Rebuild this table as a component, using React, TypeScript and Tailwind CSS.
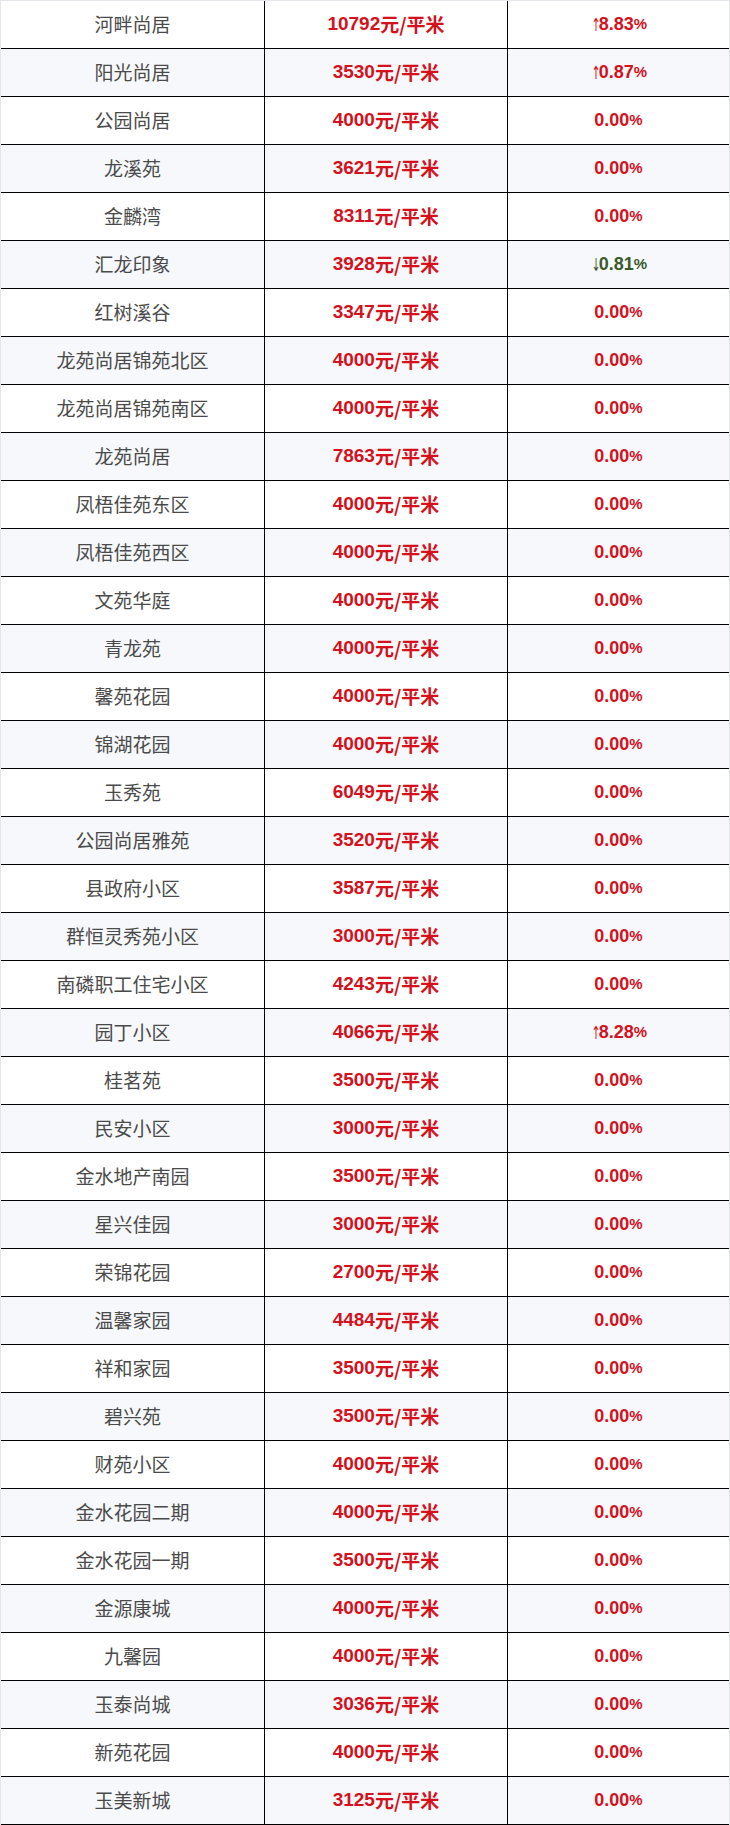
import React from "react";

type Row = [string, number, string?, "up" | "down"?];

const rows: Row[] = [
  ["河畔尚居", 10792, "8.83", "up"],
  ["阳光尚居", 3530, "0.87", "up"],
  ["公园尚居", 4000],
  ["龙溪苑", 3621],
  ["金麟湾", 8311],
  ["汇龙印象", 3928, "0.81", "down"],
  ["红树溪谷", 3347],
  ["龙苑尚居锦苑北区", 4000],
  ["龙苑尚居锦苑南区", 4000],
  ["龙苑尚居", 7863],
  ["凤梧佳苑东区", 4000],
  ["凤梧佳苑西区", 4000],
  ["文苑华庭", 4000],
  ["青龙苑", 4000],
  ["馨苑花园", 4000],
  ["锦湖花园", 4000],
  ["玉秀苑", 6049],
  ["公园尚居雅苑", 3520],
  ["县政府小区", 3587],
  ["群恒灵秀苑小区", 3000],
  ["南磷职工住宅小区", 4243],
  ["园丁小区", 4066, "8.28", "up"],
  ["桂茗苑", 3500],
  ["民安小区", 3000],
  ["金水地产南园", 3500],
  ["星兴佳园", 3000],
  ["荣锦花园", 2700],
  ["温馨家园", 4484],
  ["祥和家园", 3500],
  ["碧兴苑", 3500],
  ["财苑小区", 4000],
  ["金水花园二期", 4000],
  ["金水花园一期", 3500],
  ["金源康城", 4000],
  ["九馨园", 4000],
  ["玉泰尚城", 3036],
  ["新苑花园", 4000],
  ["玉美新城", 3125],
];

function Arrow({ dir }: { dir: "up" | "down" }) {
  return (
    <span className="mr-[2px] inline-block w-[7px] scale-x-60 font-['DejaVu_Sans',sans-serif] text-[18px] font-normal">
      {dir === "up" ? "↑" : "↓"}
    </span>
  );
}

export default function App() {
  return (
    <div className="w-[730px] border-x border-t border-[#e3e6ea] bg-white">
      {rows.map(([name, price, pct, dir], i) => (
        <div
          key={i}
          className={`flex h-[48px] border-b border-black ${i % 2 === 1 ? "bg-[#f6f8fb]" : "bg-white"}`}
        >
          <div className="flex w-[264px] items-center justify-center border-r border-black font-['Noto_Sans_CJK_SC',sans-serif] text-[19px] text-[#4a4a4a]">
            {name}
          </div>
          <div className="flex w-[243px] items-center justify-center border-r border-black font-['Liberation_Sans',Arial,sans-serif] text-[19px] font-bold text-[#d4111c]">
            {price}
            <span className="font-['Noto_Sans_CJK_SC',sans-serif] font-bold">元/平米</span>
          </div>
          <div
            className={`flex flex-1 items-center justify-center font-['Liberation_Sans',Arial,sans-serif] text-[18px] font-bold ${
              dir === "down" ? "text-[#3b5a2c]" : "text-[#d4111c]"
            }`}
          >
            {dir && <Arrow dir={dir} />}
            {pct ?? "0.00"}
            <span className="text-[15px]">%</span>
          </div>
        </div>
      ))}
    </div>
  );
}
